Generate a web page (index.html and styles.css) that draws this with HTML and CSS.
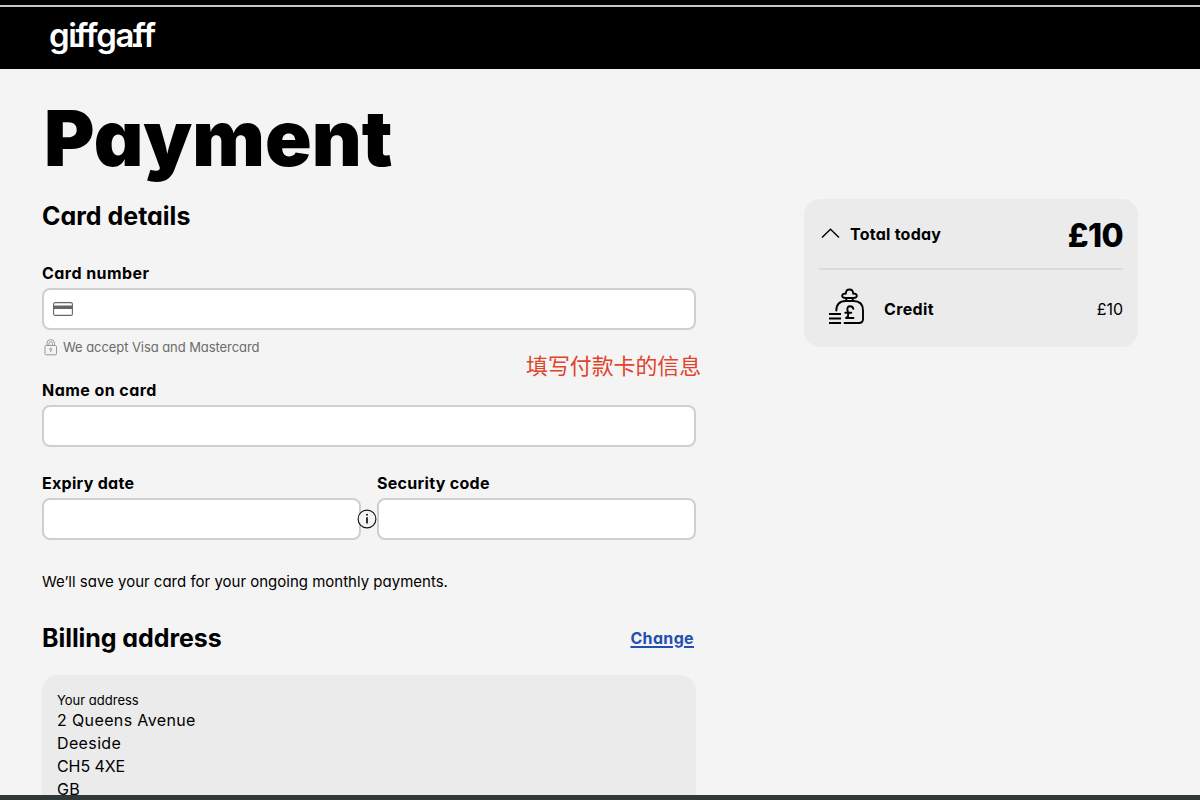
FILE: index.html
```html
<!DOCTYPE html>
<html lang="en">
<head>
    <meta charset="UTF-8">
    <meta name="viewport" content="width=device-width, initial-scale=1.0">
    <title>Payment</title>
    <link rel="stylesheet" href="styles.css">
</head>
<body>
    <div class="top-strip"></div>
    <header class="header">
        <svg class="logo" width="110" height="46" viewBox="0 0 110 46" fill="#fff">
            <text x="-1" y="30" textLength="107">giffgaff</text>
            <path d="M22 26.500h8v3.500h-8zM83 26.500h9v3.500h-9z"/>
        </svg>
    </header>
    <main class="container">
        <div class="payment">
            <h1>Payment</h1>
            <h2 class="card-title">Card details</h2>
            <form>
                <label class="label-number" for="number">Card number</label>
                <div class="input-box">
                    <svg width="20" height="14" viewBox="0 0 20 14">
                        <rect x="0.6" y="0.6" width="18.8" height="12.8" rx="1.5" fill="none" stroke="#666" stroke-width="1.1"/>
                        <rect x="0.6" y="3.5" width="18.8" height="3.5" fill="#666"/>
                    </svg>
                    <input type="text" id="number">
                </div>
                <div class="hint">
                    <svg width="14" height="17" viewBox="0 0 14 17" fill="none" stroke="#999">
                        <rect x="1" y="6.5" width="11.5" height="9.3" rx="1.2"/>
                        <path d="M3 6.5V4.3a3.75 3.75 0 0 1 7.5 0v2.2M5 6.5V4.5a1.75 1.75 0 0 1 3.5 0v2"/>
                        <circle cx="6.75" cy="10.2" r="1"/>
                        <path d="M6.75 11.2v2"/>
                    </svg>
                    <span>We accept Visa and Mastercard</span>
                </div>
                <label class="label-name" for="name">Name on card</label>
                <div class="input-box">
                    <input type="text" id="name">
                </div>
                <div class="row">
                    <div class="field">
                        <label class="label-expiry" for="expiry">Expiry date</label>
                        <div class="input-box">
                            <input type="text" id="expiry">
                        </div>
                        <svg class="info" width="20" height="20" viewBox="0 0 20 20">
                            <circle cx="10" cy="10" r="8.9" fill="#f4f4f4" stroke="#111" stroke-width="1.1"/>
                            <path d="M10 8.2v6.3" stroke="#111" stroke-width="1.7"/>
                            <circle cx="10" cy="5.8" r="1" fill="#111"/>
                        </svg>
                    </div>
                    <div class="field">
                        <label class="label-code" for="code">Security code</label>
                        <div class="input-box">
                            <input type="text" id="code">
                        </div>
                    </div>
                </div>
            </form>
            <div class="note">填写付款卡的信息</div>
            <p class="save-text">We’ll save your card for your ongoing monthly payments.</p>
            <div class="billing">
                <h2 class="billing-title">Billing address</h2>
                <a href="#">Change</a>
            </div>
            <div class="address">
                <div class="address-label">Your address</div>
                <div>2 Queens Avenue</div>
                <div>Deeside</div>
                <div class="postcode">CH5 4XE</div>
                <div>GB</div>
            </div>
        </div>
        <aside class="summary">
            <div class="total">
                <svg width="20" height="12" viewBox="0 0 20 12">
                    <path d="M1 9.500 9.500 1.200l8.500 8.300" fill="none" stroke="#000" stroke-width="1.4"/>
                </svg>
                <span class="total-label">Total today</span>
                <span class="total-price">£10</span>
            </div>
            <div class="credit">
                <svg width="38" height="38" viewBox="0 0 38 38" fill="none" stroke="#000" stroke-width="1.9" stroke-linecap="round" stroke-linejoin="round">
                    <path d="M17.500 10c-2.300 0-3.600-1-3.300-2.500.3-1.500 1.800-2.200 3.600-1.800.1-2.800 1.300-4.200 3.700-4.200s3.600 1.400 3.700 4.200c1.800-.4 3.300.3 3.600 1.800.3 1.500-1 2.500-3.300 2.500zM18.300 10v3M24.700 10v3"/>
                    <path d="M8.300 22.500c0-6 3.500-9.500 9.200-9.500h8c6 0 9.500 3.500 9.500 9.500V31c0 2.800-1.600 4-4.200 4H16.500"/>
                    <path d="M1 26h12M1 30.500h12M1 35h12" stroke-linecap="butt"/>
                    <path d="M25.300 20.800c-.3-1.700-1.500-2.600-3.200-2.600-2 0-3 1.500-2.700 3.300l.8 4.500c.2 2-.6 3.400-2.200 4h7.500M17.300 24.700h6"/>
                </svg>
                <span class="credit-label">Credit</span>
                <span class="credit-price">£10</span>
            </div>
        </aside>
    </main>
    <div class="bottom-strip"></div>
</body>
</html>
```
FILE: styles.css
```css
* {
    box-sizing: border-box;
}
body {
    font-family: Inter, "Noto Sans CJK SC", sans-serif;
    font-feature-settings: "cv11";
    margin: 0;
    height: 800px;
    overflow: hidden;
    background: #f4f4f4;
    color: #000;
    display: flex;
    flex-direction: column;
}
.top-strip {
    height: 7px;
    flex: none;
    background: #000;
    border-bottom: 2px solid #c4c4c8;
}
.header {
    height: 62px;
    flex: none;
    background: #000;
    padding: 10px 50px;
}
.logo {
    display: block;
    overflow: visible;
    font-feature-settings: normal;
    font-size: 33px;
    font-weight: 600;
}
.container {
    flex: 1;
    min-height: 0;
    overflow: hidden;
    display: flex;
    align-items: flex-start;
    gap: 108px;
    padding-left: 42px;
}
.payment {
    width: 654px;
    position: relative;
}
h1 {
    font-size: 77px;
    font-weight: 900;
    line-height: 80px;
    margin: 29px 0 0;
    padding-left: 2px;
}
h2 {
    font-size: 25px;
    font-weight: 700;
    line-height: 30px;
    margin: 0;
}
.card-title {
    margin: 23px 0 32px;
}
label {
    display: block;
    font-size: 16px;
    font-weight: 700;
    line-height: 20px;
    letter-spacing: 0.45px;
    margin-bottom: 5px;
}
.input-box {
    height: 42px;
    background: #fff;
    border: 2px solid #cfcfcf;
    border-radius: 8px;
    display: flex;
    align-items: center;
    padding: 0 9px;
}
.input-box input {
    flex: 1;
    min-width: 0;
    border: none;
    outline: none;
    background: none;
    font-size: 16px;
}
.hint {
    display: flex;
    align-items: center;
    gap: 5px;
    font-size: 13px;
    line-height: 20px;
    letter-spacing: -0.07px;
    color: #6b6b6b;
    margin: 7px 0 23px;
    padding-left: 2px;
}
.label-expiry,
.label-code {
    letter-spacing: 0.3px;
}
.row {
    display: flex;
    gap: 16px;
    margin-top: 26px;
}
.field {
    flex: 1;
    position: relative;
}
.info {
    position: absolute;
    right: -16px;
    bottom: 11px;
}
.note {
    position: absolute;
    left: 484px;
    top: 281px;
    color: #e0442c;
    font-size: 21.9px;
    line-height: 32px;
    white-space: nowrap;
}
.save-text {
    font-size: 15px;
    line-height: 20px;
    margin: 32px 0 31px;
}
.billing {
    display: flex;
    justify-content: space-between;
    align-items: center;
    padding-right: 2px;
}
.billing-title {
    letter-spacing: -0.07px;
}
.billing a {
    color: #2350b0;
    font-size: 16px;
    font-weight: 700;
    letter-spacing: 0.35px;
    text-decoration-thickness: 2px;
    text-underline-offset: 2px;
}
.address {
    margin-top: 22px;
    height: 150px;
    padding: 16px 15px;
    background: #ebebeb;
    border-radius: 16px;
    font-size: 16px;
    line-height: 23px;
    letter-spacing: 0.37px;
}
.address-label {
    font-size: 13px;
    line-height: 18px;
    letter-spacing: 0;
}
.postcode {
    letter-spacing: -0.1px;
}
.summary {
    width: 334px;
    height: 148px;
    margin-top: 130px;
    padding: 0 15px;
    background: #ebebeb;
    border-radius: 16px;
}
.total {
    height: 71px;
    display: flex;
    align-items: center;
    border-bottom: 2px solid #dadada;
    padding: 1px 0 0 2px;
}
.total-label {
    margin-left: 9px;
    font-size: 16px;
    font-weight: 700;
    letter-spacing: 0.25px;
}
.total-price {
    margin-left: auto;
    padding-top: 3px;
    font-size: 32px;
    font-weight: 800;
    letter-spacing: -0.6px;
}
.credit {
    height: 77px;
    display: flex;
    align-items: center;
    padding-left: 9px;
}
.credit svg {
    margin-bottom: 4px;
}
.credit-label {
    margin-left: 18px;
    font-size: 16px;
    font-weight: 700;
    letter-spacing: 0.35px;
}
.credit-price {
    margin-left: auto;
    font-size: 16px;
}
.bottom-strip {
    height: 5px;
    flex: none;
    background: #30383a;
}
```
